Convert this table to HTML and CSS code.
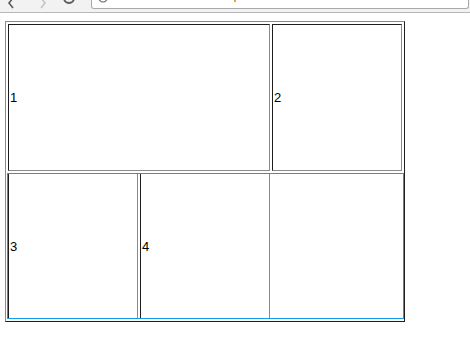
FILE: index.html
```html
<!DOCTYPE html>
<html>
<head>
<meta charset="utf-8">
<link rel="stylesheet" href="styles.css">
</head>
<body>
<div class="chrome">
  <svg class="ico back" width="12" height="12" viewBox="0 0 12 12"><path d="M7 -2 L3 3 L7 8" fill="none" stroke="#5a5a5a" stroke-width="1.6"/></svg>
  <svg class="ico fwd" width="12" height="12" viewBox="0 0 12 12"><path d="M4 -2 L8 3 L4 8" fill="none" stroke="#c4c4c4" stroke-width="1.6"/></svg>
  <svg class="ico reload" width="14" height="12" viewBox="0 0 14 12"><path d="M2 -2 A5 5 0 0 0 12 -2" fill="none" stroke="#5a5a5a" stroke-width="1.8"/></svg>
  <div class="omnibox">
    <svg class="info" width="10" height="8" viewBox="0 0 10 8"><path d="M1 -2 A4 4 0 0 0 9 -2" fill="none" stroke="#6a6a6a" stroke-width="1.2"/></svg>
    <span class="url"></span>
  </div>
</div>
<div class="page">
  <div class="tablewrap">
    <table class="grid">
      <tr class="r1">
        <td colspan="2">1</td>
        <td>2</td>
      </tr>
      <tr class="r2">
        <td>3</td>
        <td>4</td>
      </tr>
    </table>
    <div class="row-highlight"></div>
  </div>
</div>
</body>
</html>
```
FILE: styles.css
```css
html, body {
  margin: 0;
  padding: 0;
  background: #fff;
}
body {
  font-family: "Liberation Sans", Arial, sans-serif;
  font-size: 13px;
  color: #000;
}
.chrome {
  display: flex;
  align-items: flex-start;
  height: 12px;
  background: #f2f2f2;
  border-bottom: 1px solid #b8b8b8;
  overflow: hidden;
}
.ico {
  flex: none;
  display: block;
}
.back { margin-left: 6px; }
.fwd { margin-left: 19px; }
.reload { margin-left: 13px; }
.omnibox {
  flex: 1;
  display: flex;
  align-items: flex-start;
  height: 8px;
  margin-left: 15px;
  margin-right: 1px;
  background: #fff;
  border: 1px solid #a9a9a9;
  border-top: none;
  border-radius: 0 0 3px 3px;
}
.info {
  display: block;
  margin-left: 6px;
}
.url {
  display: block;
  width: 2px;
  height: 2px;
  margin-left: 126px;
  background: #e8a33a;
}
.page {
  padding: 8px 0 0 5px;
}
.tablewrap {
  position: relative;
  display: block;
  width: 400px;
}
.grid {
  width: 400px;
  border-collapse: separate;
  border-spacing: 2px;
  border: 1px solid;
  border-color: #8a8a8a #1e1e1e #1e1e1e #8a8a8a;
}
.grid td {
  box-sizing: border-box;
  padding: 1px;
  border: 1px solid;
  border-color: #1e1e1e #8a8a8a #8a8a8a #1e1e1e;
  vertical-align: middle;
  width: 130px;
}
.r1 td { height: 147px; }
.r2 td { height: 146px; }
.row-highlight {
  position: absolute;
  z-index: 2;
  left: 2px;
  top: 152px;
  width: 397px;
  height: 146px;
  box-sizing: border-box;
  border: 1px solid #119cef;
  pointer-events: none;
}
```
